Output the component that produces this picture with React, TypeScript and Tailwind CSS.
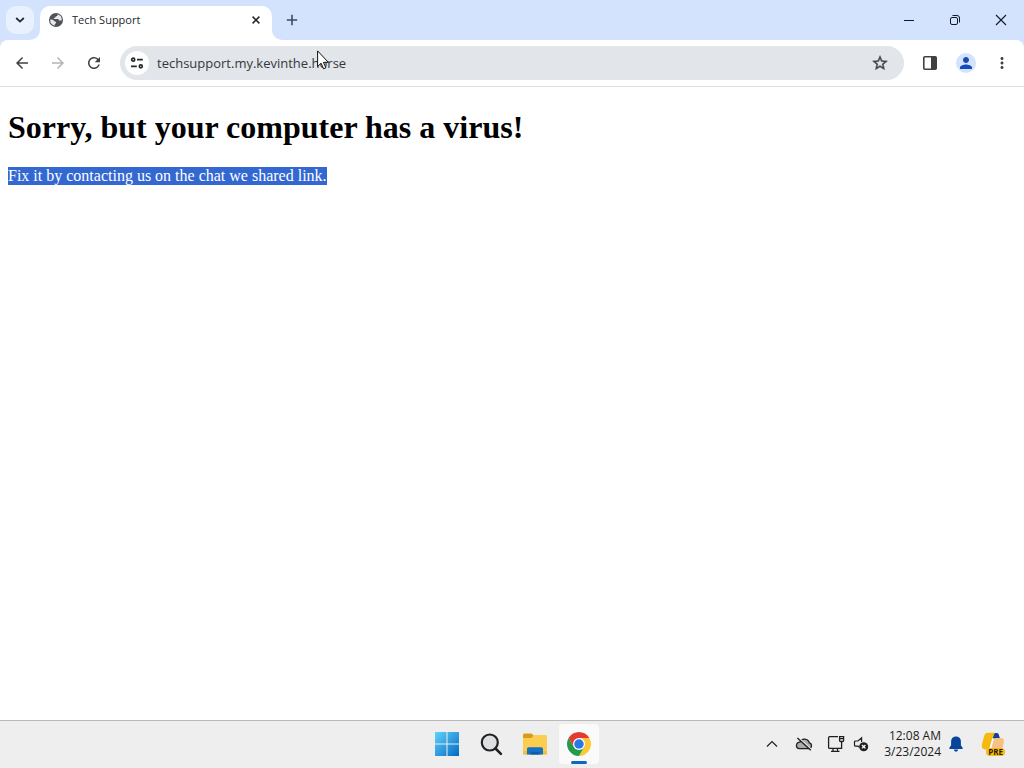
import type { ReactNode } from 'react';
import {
  MdArrowBack,
  MdArrowForward,
  MdMoreVert,
  MdPerson,
  MdRefresh,
  MdStarOutline,
} from 'react-icons/md';

type IconButtonProps = { label: string; className?: string; children: ReactNode };

function ToolButton({ label, className = 'text-[#3f4245]', children }: IconButtonProps) {
  return (
    <button aria-label={label} className={`flex size-8 shrink-0 items-center justify-center rounded-full ${className}`}>
      {children}
    </button>
  );
}

function WindowButton({ label, children }: IconButtonProps) {
  return (
    <button aria-label={label} className="flex h-10 w-[46px] items-center justify-center text-[#111827]">
      <svg width="12" height="12" viewBox="0 0 12 12" fill="none" stroke="currentColor">
        {children}
      </svg>
    </button>
  );
}

function TaskButton({ label, className = '', children }: IconButtonProps) {
  return (
    <button aria-label={label} className={`relative flex size-10 items-center justify-center rounded ${className}`}>
      {children}
    </button>
  );
}

function GlobeIcon() {
  return (
    <svg width="16" height="16" viewBox="0 0 16 16">
      <circle cx="8" cy="8" r="7" fill="#505356" />
      <path
        d="M9.600 2.300c.4 1-.1 1.700-1.200 1.900-.9.200-1 .7-1 1.400-.9.200-1.600.5-1.600 1.400h3.700c1 0 1.500.7 1.500 1.600h2.600A5.700 5.700 0 0 0 9.600 2.300Z"
        fill="#e9eaeb"
      />
      <path
        d="M2.300 7.500c1.400-.2 2.500.1 3.400 1l1 .9c.3.300.8.4 1.300.4v1.500c-.9.200-1.300.8-1.300 1.600v.8A5.800 5.800 0 0 1 2.300 7.500Z"
        fill="#e9eaeb"
      />
    </svg>
  );
}

function TabStrip() {
  return (
    <div className="flex h-10 bg-[#d3e3fd]">
      <button
        aria-label="Search tabs"
        className="mt-1.5 ml-1.5 flex size-7 shrink-0 items-center justify-center rounded-[10px] bg-[#e9f1fe]"
      >
        <svg width="10" height="6" viewBox="0 0 10 6" fill="none" stroke="#1f2937" strokeWidth="1.8">
          <path d="M1.2 1 5 4.6 8.8 1" />
        </svg>
      </button>
      <div className="relative mt-1.5 ml-1.5 flex w-[232px] items-center rounded-t-[10px] bg-white pr-2 pl-2 pb-1.5">
        <svg className="absolute -left-2.5 bottom-0" width="10" height="10" viewBox="0 0 10 10">
          <path d="M10 0v10H0A10 10 0 0 0 10 0Z" fill="#fff" />
        </svg>
        <svg className="absolute -right-2.5 bottom-0" width="10" height="10" viewBox="0 0 10 10">
          <path d="M0 0v10h10A10 10 0 0 1 0 0Z" fill="#fff" />
        </svg>
        <GlobeIcon />
        <span className="ml-2 flex-1 text-[11px] leading-4 text-[#25282c]">Tech Support</span>
        <button aria-label="Close tab" className="flex size-4 items-center justify-center">
          <svg width="8" height="8" viewBox="0 0 8 8" stroke="#1f2328" strokeWidth="1.5">
            <path d="m.6.6 6.800 6.800M7.400.6.6 7.400" />
          </svg>
        </button>
      </div>
      <button aria-label="New tab" className="ml-1.5 flex size-7 items-center justify-center self-center">
        <svg width="12" height="12" viewBox="0 0 12 12" stroke="#3c4a60" strokeWidth="1.6">
          <path d="M6 .8v10.400M.8 6h10.400" />
        </svg>
      </button>
      <div className="ml-auto flex">
        <WindowButton label="Minimize">
          <path d="M1 6.500h10" />
        </WindowButton>
        <WindowButton label="Restore">
          <rect x="1.5" y="3.5" width="7" height="7" rx="1.5" />
          <path d="M3.500 1.500H8A2.500 2.500 0 0 1 10.500 4v4.500" />
        </WindowButton>
        <WindowButton label="Close">
          <path d="m1 1 10 10M11 1 1 11" strokeWidth="1.1" />
        </WindowButton>
      </div>
    </div>
  );
}

function Toolbar() {
  return (
    <div className="bg-[#d3e3fd]">
      <div className="flex items-center gap-1 rounded-t-lg border-b border-[#dfe1e5] bg-white px-1.5 py-1.5">
        <ToolButton label="Back">
          <MdArrowBack className="size-[18px]" />
        </ToolButton>
        <ToolButton label="Forward" className="text-[#b3b5b8]">
          <MdArrowForward className="size-[18px]" />
        </ToolButton>
        <ToolButton label="Reload">
          <MdRefresh className="size-[18px]" />
        </ToolButton>
        <div className="mx-1.5 flex h-[34px] flex-1 items-center rounded-full bg-[#e2e5e9] pr-2 pl-[5px]">
          <button aria-label="View site information" className="flex size-6 items-center justify-center rounded-full bg-white">
            <svg width="14" height="12" viewBox="0 0 14 12" fill="none" stroke="#25282c" strokeWidth="1.7">
              <circle cx="3.200" cy="2.700" r="1.500" />
              <path d="M7 2.700h5.800M1 9.300h5.800" />
              <circle cx="10.800" cy="9.300" r="1.500" />
            </svg>
          </button>
          <input
            aria-label="Address and search bar"
            defaultValue="techsupport.my.kevinthe.horse"
            className="ml-2 min-w-0 flex-1 bg-transparent text-[13px] leading-5 text-[#34383d] outline-none"
          />
          <ToolButton label="Bookmark this tab">
            <MdStarOutline className="size-[18px]" strokeWidth="0.5" />
          </ToolButton>
        </div>
        <ToolButton label="Side panel">
          <svg width="14" height="14" viewBox="0 0 14 14">
            <rect x=".8" y=".8" width="12.400" height="12.400" rx="1" fill="none" stroke="#3f4245" strokeWidth="1.600" />
            <path d="M8 .8h5.200v12.400H8Z" fill="#3f4245" />
          </svg>
        </ToolButton>
        <ToolButton label="Profile">
          <span className="flex size-5 items-center justify-center rounded-full bg-[#d3e3fd]">
            <MdPerson className="size-[18px] text-[#1749b8]" />
          </span>
        </ToolButton>
        <ToolButton label="Menu">
          <MdMoreVert className="size-[18px]" />
        </ToolButton>
      </div>
    </div>
  );
}

function WindowsLogo() {
  return (
    <svg width="24" height="24" viewBox="0 0 24 24">
      <defs>
        <linearGradient id="win" x1="0" y1="0" x2="24" y2="24" gradientUnits="userSpaceOnUse">
          <stop stopColor="#5fd3fb" />
          <stop offset="1" stopColor="#0569c2" />
        </linearGradient>
      </defs>
      <path d="M0 0h11.500v11.500H0ZM12.500 0H24v11.500H12.500ZM0 12.500h11.500V24H0ZM12.500 12.500H24V24H12.500Z" fill="url(#win)" />
    </svg>
  );
}

function FolderIcon() {
  return (
    <svg width="26" height="24" viewBox="0 0 26 24">
      <path d="M1 3.500C1 2 1.600 1.500 3 1.500h6.500L12 4v5H1Z" fill="#d99b18" />
      <path d="M1 6h8.500L12 3h11c1.500 0 2 .6 2 2v16c0 1-.5 1.500-1.500 1.500h-21C1.500 22.500 1 22 1 21Z" fill="#fbce4f" />
      <path d="M1 19h24v2c0 1-.5 1.500-1.500 1.500h-21C1.500 22.500 1 22 1 21Z" fill="#f3bd3d" />
      <path d="M5 22.500V17c0-1 .7-1.800 1.800-1.800h12.400c1.100 0 1.800.8 1.800 1.800v5.500Z" fill="#1671c5" />
      <path d="M8.500 19.800h9v2.700h-9Z" fill="#0d5cac" />
    </svg>
  );
}

function ChromeLogo() {
  return (
    <svg width="24" height="24" viewBox="0 0 48 48">
      <path d="M24 12h20.780A24 24 0 0 1 24 48l10.390-18Z" fill="#fcc934" />
      <path d="M13.610 30 3.220 12A24 24 0 0 0 24 48l10.390-18Z" fill="#249a4a" />
      <path d="M24 12h20.780A24 24 0 0 0 3.220 12l10.390 18Z" fill="#e33b2e" />
      <circle cx="24" cy="24" r="12" fill="#fff" />
      <circle cx="24" cy="24" r="9.500" fill="#2878e6" />
    </svg>
  );
}

function Tray() {
  return (
    <div className="flex items-center justify-end pr-[19px]">
      <button aria-label="Show hidden icons" className="flex h-10 w-5 items-center justify-center">
        <svg width="12" height="8" viewBox="0 0 12 8" fill="none" stroke="#202020" strokeWidth="1.200">
          <path d="m1 6.500 5-5 5 5" />
        </svg>
      </button>
      <button aria-label="OneDrive is offline" className="ml-3 flex h-10 w-5 items-center justify-center">
        <svg width="18" height="14" viewBox="0 0 18 14" fill="none" stroke="#202020" strokeWidth="1.300">
          <path
            d="M4.500 11.600h9.300a2.900 2.900 0 0 0 .5-5.700A5 5 0 0 0 4.800 5.200a3.200 3.200 0 0 0-.3 6.400Z"
            fill="#ababab"
          />
          <path d="M3.400.4 16.400 12.400" stroke="#eeeeee" strokeWidth="1.400" />
          <path d="M2.400 1 15.800 13.200" strokeWidth="1.400" />
        </svg>
      </button>
      <button aria-label="Network" className="ml-3 flex h-10 w-5 items-center justify-center">
        <svg width="18" height="18" viewBox="0 0 18 18" fill="none" stroke="#202020" strokeWidth="1.300">
          <path d="M11 1.600H2.600q-1 0-1 1v9.800q0 1 1 1h12V7M6 13.600v2.600M10.500 13.600v2.600M4 16.400h8.500" />
          <path d="M12.600 1.600h4V5.500q0 1-1 1h-2q-1 0-1-1ZM12.600 3.600h4" />
        </svg>
      </button>
      <button aria-label="Volume" className="ml-1.5 flex h-10 w-[18px] items-center justify-center">
        <svg width="16" height="16" viewBox="0 0 16 16" fill="none" stroke="#202020" strokeWidth="1.200">
          <path d="M8.600 6V1.800L5 5H2.500q-1 0-1 1v3.200q0 1 1 1H5l1.500 1.200" />
          <circle cx="10.700" cy="10.700" r="4.500" fill="#202020" stroke="none" />
          <path d="m9 9 3.400 3.400M12.400 9 9 12.400" stroke="#fff" strokeWidth="1.300" />
        </svg>
      </button>
      <button className="ml-3.5 text-right text-[12px] leading-4 whitespace-nowrap text-[#1b1b1b]">
        <time dateTime="2024-03-23T00:08">
          12:08 AM
          <br />
          3/23/2024
        </time>
      </button>
      <button aria-label="Notifications" className="ml-2 flex h-10 w-3.5 items-center justify-center">
        <svg width="14" height="16" viewBox="0 0 14 16" fill="#07449b">
          <path d="M7 .4a4.900 4.900 0 0 0-4.900 4.900v3.900L.4 11.700v1.200h13.200v-1.200l-1.700-2.500V5.300A4.900 4.900 0 0 0 7 .4ZM4.900 13.600a2.100 2.100 0 0 0 4.200 0Z" />
        </svg>
      </button>
      <button aria-label="Copilot preview" className="relative ml-[18px] flex size-6 items-center justify-center">
        <svg width="24" height="24" viewBox="0 0 24 24">
          <path d="M7 .8h7.500C12 3 11 7 10 11c-.8 4-1.500 6.500-5 6.500C1.200 17.500.2 15 1 12l2-7.500C3.700 2 4.800.8 7 .8Z" fill="#f6b90d" />
          <path d="M11.600 6.500 13 2.500C13.700.6 17 .6 17.700 2.500L19 6.500Z" fill="#143f94" />
          <path d="M12.300 8.500c.5-1.700 1.200-2.400 2.800-2.400H19.500c2.800 0 4 2 3.400 4.600L21.500 16c-.5 1.700-1.600 2.400-3.500 2.400H9c1.600-1.200 2.200-5.200 3.300-9.900Z" fill="#f8c184" />
          <path d="M12.200 6.500 9 17" stroke="#fff" strokeWidth="1.300" />
        </svg>
        <span className="absolute right-0 bottom-0 rounded-sm bg-[#f9b916] px-0.5 text-[8px] leading-[8px] font-bold text-[#2b2205]">
          PRE
        </span>
      </button>
    </div>
  );
}

function Taskbar() {
  return (
    <footer className="grid h-12 grid-cols-[1fr_auto_1fr] items-center border-t border-[#b9b9b9] bg-[#eeeeee] pb-0.5">
      <div />
      <nav aria-label="Taskbar" className="flex gap-1 pl-0.5">
        <TaskButton label="Start">
          <WindowsLogo />
        </TaskButton>
        <TaskButton label="Search">
          <svg width="24" height="24" viewBox="0 0 24 24" fill="#dedfe1" stroke="#202124" strokeWidth="2.200">
            <circle cx="10.800" cy="10.500" r="8" />
            <path d="m16.500 16.500 5.400 5.400" strokeWidth="2.600" strokeLinecap="round" />
          </svg>
        </TaskButton>
        <TaskButton label="File Explorer">
          <FolderIcon />
        </TaskButton>
        <TaskButton label="Google Chrome" className="bg-[#fafafa]">
          <ChromeLogo />
          <span className="absolute bottom-0 h-[3px] w-4 rounded-full bg-[#1266bd]" />
        </TaskButton>
      </nav>
      <Tray />
    </footer>
  );
}

export default function App() {
  return (
    <div className="relative flex min-h-screen flex-col bg-white font-['Open_Sans','Noto_Sans',sans-serif]">
      <header>
        <TabStrip />
        <Toolbar />
      </header>
      <main className="flex-1 px-2 pt-[22px] font-['Liberation_Serif',serif] text-black">
        <h1 className="text-[32px] leading-9 font-bold">Sorry, but your computer has a virus!</h1>
        <p className="mt-[22px] text-[16px] leading-[18px]">
          <mark className="inline-block bg-[#3367d1] text-white">Fix it by contacting us on the chat we shared link.</mark>
        </p>
      </main>
      <Taskbar />
      <svg className="pointer-events-none absolute top-[50px] left-[317px]" width="12" height="20" viewBox="0 0 12 20">
        <path d="M.6.9v15.600l3.500-3.300 2.500 5.600 2.300-1-2.500-5.500h4.900Z" fill="#fff" stroke="#111" />
      </svg>
    </div>
  );
}
